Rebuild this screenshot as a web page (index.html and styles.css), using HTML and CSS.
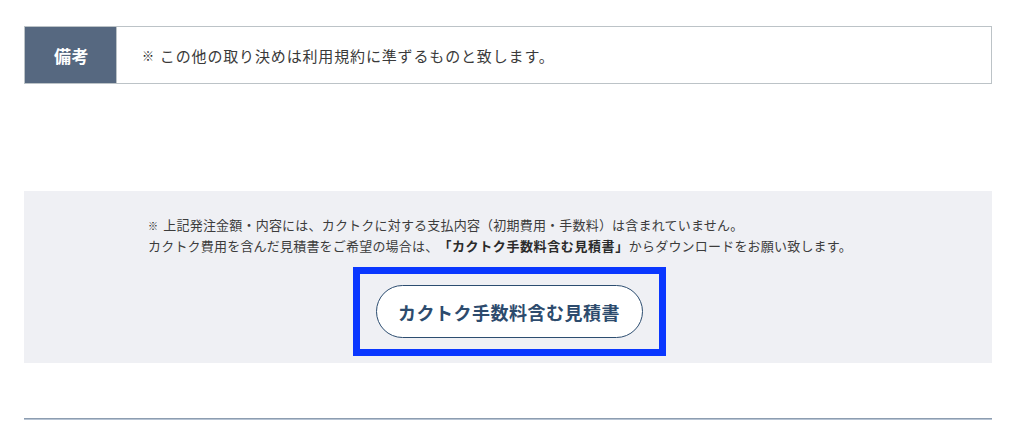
FILE: index.html
```html
<!DOCTYPE html>
<html lang="ja">
<head>
<meta charset="utf-8">
<link rel="stylesheet" href="styles.css">
</head>
<body>
<div class="page">
  <div class="remarks">
    <div class="remarks-label">備考</div>
    <div class="remarks-body"><span class="kome">※</span> この他の取り決めは利用規約に準ずるものと致します。</div>
  </div>

  <div class="fee-box">
    <div class="fee-note">
      <p><span class="kome-s">※</span> 上記発注金額・内容には、カクトクに対する支払内容（初期費用・手数料）は含まれていません。</p>
      <p>カクトク費用を含んだ見積書をご希望の場合は、<strong>「カクトク手数料含む見積書」</strong>からダウンロードをお願い致します。</p>
    </div>
    <div class="highlight">
      <a class="fee-button">カクトク手数料含む見積書</a>
    </div>
  </div>

  <hr class="divider">
</div>
</body>
</html>
```

FILE: styles.css
```css
* { box-sizing: border-box; }
html, body { margin: 0; padding: 0; background: #fff; }
body {
  font-family: "Noto Sans CJK JP", "Noto Sans", sans-serif;
  color: #333;
  text-spacing-trim: space-all;
}
.page {
  width: 968px;
  margin-left: 24px;
  padding-top: 26px;
}
.remarks {
  display: flex;
  height: 58px;
  border: 1px solid #bcc3c7;
}
.remarks-label {
  width: 92px;
  background: #566880;
  color: #fff;
  font-weight: 700;
  font-size: 17px;
  letter-spacing: 0.5px;
  display: flex;
  align-items: center;
  justify-content: center;
  border-right: 1px solid #bcc3c7;
  padding-top: 1px;
  padding-left: 2px;
}
.remarks-body {
  flex: 1;
  display: flex;
  align-items: center;
  padding-left: 25px;
  font-size: 15px;
  letter-spacing: 0.85px;
  color: #3a3a3a;
}
.kome { font-size: 12px; margin-right: 5px; color: #222; }
.fee-box {
  margin-top: 107px;
  height: 172px;
  background: #eff0f4;
  padding-top: 24px;
}
.fee-note {
  width: 720px;
  margin: 0 auto;
  font-size: 13px;
  letter-spacing: 0.2px;
  line-height: 20px;
  color: #3c3c3c;
}
.fee-note p { margin: 0; }
.fee-note strong { font-weight: 700; color: #2b2b2b; letter-spacing: 0.6px; }
.kome-s { font-size: 10px; margin-right: 2px; color: #222; }
.highlight {
  width: 313px;
  margin: 11px auto 0;
  border: 7px solid #0a37ff;
  padding: 11px 16px;
  position: relative;
  left: 1px;
}
.fee-button {
  display: flex;
  align-items: center;
  justify-content: center;
  height: 53px;
  border: 1px solid #2c4d70;
  border-radius: 27px;
  background: #fff;
  color: #2d4b6d;
  font-weight: 700;
  font-size: 18px;
  letter-spacing: 0.5px;
}
.divider {
  margin: 55px 0 0;
  border: 0;
  height: 2px;
  background: linear-gradient(#8d9db0 50%, #b7c4d4 50%);
}
```
